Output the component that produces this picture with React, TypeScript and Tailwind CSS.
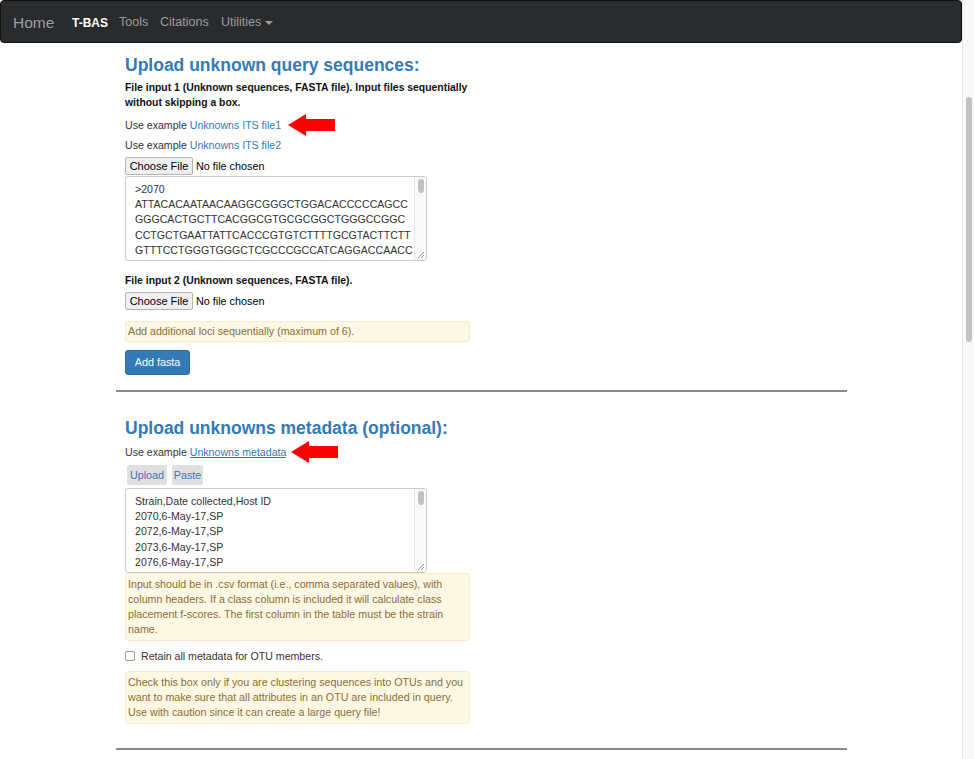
import React from 'react'

const font = { fontFamily: '"Liberation Sans", Arial, sans-serif' }

const fasta = [
  '>2070',
  'ATTACACAATAACAAGGCGGGCTGGACACCCCCAGCC',
  'GGGCACTGCTTCACGGCGTGCGCGGCTGGGCCGGC',
  'CCTGCTGAATTATTCACCCGTGTCTTTTGCGTACTTCTT',
  'GTTTCCTGGGTGGGCTCGCCCGCCATCAGGACCAACC',
  'ACAAAGGTTTTGCAATCGCAATGCAGCCCTACTCACAAG',
]

const meta = [
  'Strain,Date collected,Host ID',
  '2070,6-May-17,SP',
  '2072,6-May-17,SP',
  '2073,6-May-17,SP',
  '2076,6-May-17,SP',
  '2082,17-Jun-18,SP',
]

function Arrow() {
  return (
    <svg width="47" height="22" viewBox="0 0 47 22" className="block">
      <polygon points="0,11 18,0 18,5 47,5 47,17 18,17 18,22" fill="#ff0000" />
    </svg>
  )
}

function FakeTextarea({ lines }: { lines: string[] }) {
  return (
    <div className="relative flex h-[85px] w-[302px] overflow-hidden rounded-[3px] border border-[#ccc] bg-white">
      <div className="flex-1 overflow-hidden pl-[9px] pt-[5px] text-[10.6px] leading-[15.2px] text-[#333]">
        {lines.map((l, i) => (
          <div key={i} className="whitespace-nowrap">{l}</div>
        ))}
      </div>
      <div className="relative w-[12px] border-l border-[#e6e6e6] bg-[#fafafa]">
        <div className="mx-auto mt-[2px] h-[14px] w-[6px] rounded-full bg-[#c1c1c1]" />
      </div>
      <svg width="9" height="9" viewBox="0 0 9 9" className="absolute bottom-[1px] right-[1px]">
        <line x1="2" y1="8" x2="8" y2="2" stroke="#999" strokeWidth="1" />
        <line x1="5" y1="8" x2="8" y2="5" stroke="#999" strokeWidth="1" />
      </svg>
    </div>
  )
}

function FileInput() {
  return (
    <div className="flex items-center gap-[3px] text-[10.8px] text-black">
      <button className="h-[18px] w-[68px] rounded-[2px] border border-[#b5b5b5] bg-[#efefef] text-[11px] leading-none text-black">
        Choose File
      </button>
      <span>No file chosen</span>
    </div>
  )
}

function Note({ children, className = '' }: { children: React.ReactNode; className?: string }) {
  return (
    <div
      className={`w-[345px] rounded-[3px] border border-[#faebcc] bg-[#fcf8e3] px-[2px] text-[10.7px] leading-[15px] text-[#8a6d3b] ${className}`}
    >
      {children}
    </div>
  )
}

export default function App() {
  return (
    <div style={font} className="flex h-[759px] w-[974px] overflow-hidden bg-white text-[#333]">
      <div className="flex w-[962px] flex-col">
        <nav className="flex h-[43px] items-center rounded-[4px] border border-[#111] bg-[#2a2b2d] pl-[12px] pt-[2px]">
          <span className="w-[59px] text-[15.5px] text-[#9d9d9d]">Home</span>
          <span className="w-[47px] text-[12px] font-bold text-white">T-BAS</span>
          <span className="w-[41px] text-[12.5px] text-[#9d9d9d]">Tools</span>
          <span className="w-[61px] text-[12.5px] text-[#9d9d9d]">Citations</span>
          <span className="flex items-center text-[12.5px] text-[#9d9d9d]">
            Utilities
            <span className="ml-[4px] mt-[1px] h-0 w-0 border-x-[4px] border-t-[4px] border-x-transparent border-t-[#9d9d9d]" />
          </span>
        </nav>

        <div className="ml-[116px] w-[731px]">
          <div className="pl-[9px]">
            <h3 className="mt-[10px] text-[17.5px] font-bold leading-[24px] text-[#337ab7]">
              Upload unknown query sequences:
            </h3>
            <p className="mt-[3px] w-[350px] text-[10.4px] font-bold leading-[15px] text-[#111]">
              File input 1 (Unknown sequences, FASTA file). Input files sequentially without skipping a box.
            </p>
            <div className="mt-[4px] flex items-center text-[10.6px] leading-[19px]">
              <span>Use example&nbsp;</span>
              <a className="text-[#337ab7]">Unknowns ITS file1</a>
              <span className="ml-[7px]"><Arrow /></span>
            </div>
            <div className="text-[10.6px] leading-[19px]">
              Use example <a className="text-[#337ab7]">Unknowns ITS file2</a>
            </div>
            <div className="mt-[2px]">
              <FileInput />
            </div>
            <div className="mt-[1px]">
              <FakeTextarea lines={fasta} />
            </div>
            <p className="mt-[12px] text-[10.4px] font-bold leading-[15px] text-[#111]">
              File input 2 (Unknown sequences, FASTA file).
            </p>
            <div className="mt-[4px]">
              <FileInput />
            </div>
            <Note className="mt-[11px] py-[2px]">Add additional loci sequentially (maximum of 6).</Note>
            <button className="mt-[8px] h-[25px] w-[65px] rounded-[3px] border border-[#2e6da4] bg-[#337ab7] text-[10.8px] text-white">
              Add fasta
            </button>
          </div>

          <div className="mt-[15px] h-[2px] bg-[#8a8a8a]" />

          <div className="pl-[9px]">
            <h3 className="mt-[24px] text-[17.5px] font-bold leading-[24px] text-[#337ab7]">
              Upload unknowns metadata (optional):
            </h3>
            <div className="mt-[1px] flex items-center text-[10.6px] leading-[18px]">
              <span>Use example&nbsp;</span>
              <a className="text-[#337ab7] underline">Unknowns metadata</a>
              <span className="ml-[5px]"><Arrow /></span>
            </div>
            <div className="mt-[2px] flex gap-[5px] pl-[2px]">
              <span className="h-[20px] w-[40px] rounded-[2px] bg-[#e0e0e0] text-center text-[10.8px] leading-[20px] text-[#337ab7]">Upload</span>
              <span className="h-[20px] w-[31px] rounded-[2px] bg-[#e0e0e0] text-center text-[10.8px] leading-[20px] text-[#337ab7]">Paste</span>
            </div>
            <div className="mt-[3px]">
              <FakeTextarea lines={meta} />
            </div>
            <Note className="py-[3px]">
              Input should be in .csv format (i.e., comma separated values), with column headers. If a class column is
              included it will calculate class placement f-scores. The first column in the table must be the strain name.
            </Note>
            <label className="mt-[8px] flex items-center gap-[6px] text-[10.6px] leading-[14px]">
              <span className="h-[10px] w-[10px] rounded-[2px] border border-[#999] bg-white" />
              Retain all metadata for OTU members.
            </label>
            <Note className="mt-[8px] py-[3px]">
              Check this box only if you are clustering sequences into OTUs and you want to make sure that all attributes
              in an OTU are included in query. Use with caution since it can create a large query file!
            </Note>
          </div>

          <div className="mt-[24px] h-[2px] bg-[#8a8a8a]" />
        </div>
      </div>

      <div className="w-[12px] border-l border-[#e6e6e6] bg-[#f8f8f8] pt-[97px]">
        <div className="mx-auto h-[245px] w-[6px] rounded-full bg-[#c2c2c2]" />
      </div>
    </div>
  )
}
